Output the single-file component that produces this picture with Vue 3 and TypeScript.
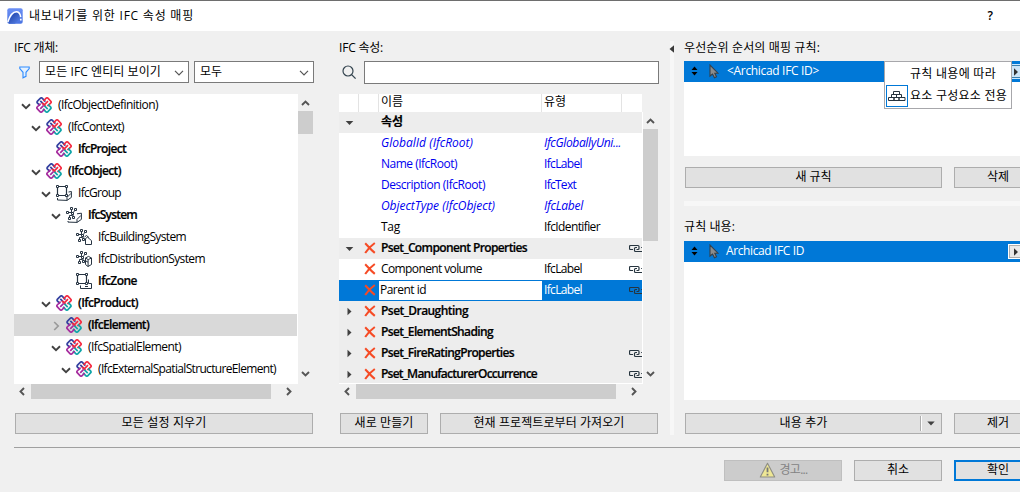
<script setup lang="ts">
import type { ObjectDirective } from 'vue'

type TreeIcon = 'ifc' | 'group' | 'system' | 'building' | 'distribution' | 'zone'
interface TreeRow { label: string; level: number; icon: TreeIcon; w: number; bold?: boolean; arrow?: 'open' | 'closed'; selected?: boolean }
interface PropRow { name: string; w: number; type?: string; tw?: number; kind: 'group' | 'item'; open?: boolean; del?: boolean; link?: boolean; blue?: boolean; italic?: boolean; selected?: boolean }

/* Spreads a label's tracking so that it fills the given width. */
const vFit: ObjectDirective<HTMLElement, number> = {
  mounted(el, { value }) {
    const n = (el.textContent ?? '').length
    const natural = el.getBoundingClientRect().width
    if (n) el.style.letterSpacing = `${(value - natural) / n}px`
  },
}

const tree: TreeRow[] = [
  { label: '(IfcObjectDefinition)', level: 0, icon: 'ifc', w: 100, arrow: 'open' },
  { label: '(IfcContext)', level: 1, icon: 'ifc', w: 56, arrow: 'open' },
  { label: 'IfcProject', level: 2, icon: 'ifc', w: 48, bold: true },
  { label: '(IfcObject)', level: 1, icon: 'ifc', w: 53, bold: true, arrow: 'open' },
  { label: 'IfcGroup', level: 2, icon: 'group', w: 43, arrow: 'open' },
  { label: 'IfcSystem', level: 3, icon: 'system', w: 49, bold: true, arrow: 'open' },
  { label: 'IfcBuildingSystem', level: 4, icon: 'building', w: 88 },
  { label: 'IfcDistributionSystem', level: 4, icon: 'distribution', w: 107 },
  { label: 'IfcZone', level: 4, icon: 'zone', w: 39, bold: true },
  { label: '(IfcProduct)', level: 2, icon: 'ifc', w: 60, bold: true, arrow: 'open' },
  { label: '(IfcElement)', level: 3, icon: 'ifc', w: 61, bold: true, arrow: 'closed', selected: true },
  { label: '(IfcSpatialElement)', level: 3, icon: 'ifc', w: 93, arrow: 'open' },
  { label: '(IfcExternalSpatialStructureElement)', level: 4, icon: 'ifc', w: 178, arrow: 'open' },
]

const props: PropRow[] = [
  { name: '속성', w: 22, kind: 'group', open: true },
  { name: 'GlobalId (IfcRoot)', w: 92, type: 'IfcGloballyUni...', tw: 77, kind: 'item', blue: true, italic: true },
  { name: 'Name (IfcRoot)', w: 76, type: 'IfcLabel', tw: 38, kind: 'item', blue: true },
  { name: 'Description (IfcRoot)', w: 104, type: 'IfcText', tw: 32, kind: 'item', blue: true },
  { name: 'ObjectType (IfcObject)', w: 114, type: 'IfcLabel', tw: 39, kind: 'item', blue: true, italic: true },
  { name: 'Tag', w: 19, type: 'IfcIdentifier', tw: 56, kind: 'item' },
  { name: 'Pset_Component Properties', w: 146, kind: 'group', open: true, del: true, link: true },
  { name: 'Component volume', w: 101, type: 'IfcLabel', tw: 38, kind: 'item', del: true, link: true },
  { name: 'Parent id', w: 46, type: 'IfcLabel', tw: 38, kind: 'item', del: true, link: true, selected: true },
  { name: 'Pset_Draughting', w: 87, kind: 'group', del: true },
  { name: 'Pset_ElementShading', w: 112, kind: 'group', del: true },
  { name: 'Pset_FireRatingProperties', w: 133, kind: 'group', del: true, link: true },
  { name: 'Pset_ManufacturerOccurrence', w: 156, kind: 'group', del: true, link: true },
]
</script>

<template>
  <div class="dialog">
    <header class="titlebar">
      <svg class="logo" width="16" height="16" viewBox="0 0 16 16">
        <defs>
          <linearGradient id="logoBg" x1="0" y1="0" x2="0" y2="1"><stop offset="0" stop-color="#6b8ff5" /><stop offset="1" stop-color="#4a74e2" /></linearGradient>
          <linearGradient id="logoIn" x1="0" y1="0" x2="1" y2="1"><stop offset="0" stop-color="#17399d" /><stop offset="1" stop-color="#5d88ef" /></linearGradient>
        </defs>
        <rect x=".3" y=".3" width="15.4" height="15.4" rx="2" fill="url(#logoBg)" />
        <path d="M1.500 14.500C4 8 7 4 10.500 4.500c2 .3 3 3 3.300 5.500L8 15.700H2z" fill="url(#logoIn)" />
        <path d="M.8 14C3 7 6 3.400 9.800 3.700c2.500.3 3.600 2.600 3.900 5.500" fill="none" stroke="#fff" stroke-width="1.500" />
        <path d="M13 10.800h1.600v1.600H13z" fill="#fff" />
      </svg>
      <span v-fit="165" class="title">내보내기를 위한 IFC 속성 매핑</span>
      <span class="help">?</span>
    </header>

    <main class="columns">
      <section class="col left">
        <div class="caption"><span v-fit="44">IFC 개체:</span></div>
        <div class="filters">
          <svg class="funnel" width="11" height="13" viewBox="0 0 11 13"><path d="M.8 1h9.400v1.600L7 6.300v4L4 11.800V6.300L.8 2.600z" fill="#e4f1ff" stroke="#2e8bff" stroke-width="1.100" /></svg>
          <div class="combo wide"><span v-fit="116">모든 IFC 엔티티 보이기</span><svg width="10" height="6" viewBox="0 0 10 6"><path d="M1 .8l4 4 4-4" fill="none" stroke="#555" stroke-width="1.200" /></svg></div>
          <div class="combo"><span v-fit="22">모두</span><svg width="10" height="6" viewBox="0 0 10 6"><path d="M1 .8l4 4 4-4" fill="none" stroke="#555" stroke-width="1.200" /></svg></div>
        </div>
        <div class="scrollgrid tree-grid">
          <div class="tree">
            <div v-for="row in tree" :key="row.label" class="tree-row" :class="{ selected: row.selected, bold: row.bold }" :style="{ paddingLeft: 6 + row.level * 10 + 'px' }">
              <span class="twist">
                <svg v-if="row.arrow === 'open'" width="10" height="7" viewBox="0 0 10 7"><path d="M1 1.300l4 3.900 4-3.900" fill="none" stroke="#424242" stroke-width="1.900" /></svg>
                <svg v-else-if="row.arrow" class="closed" width="7" height="10" viewBox="0 0 7 10"><path d="M1.200 1l4 4-4 4" fill="none" stroke="#9a9a9a" stroke-width="1.700" /></svg>
              </span>
              <svg class="node-icon" width="16" height="16" viewBox="0 0 16 16">
                <g v-if="row.icon === 'ifc'" fill="none" stroke-width="1.700">
                  <path d="M4 8.600L1.300 5.900a1.300 1.300 0 0 1 0-1.500L4.500 1.200a1.300 1.300 0 0 1 1.700 0L9.400 4.600" stroke="#33409f" />
                  <path d="M4.300 3.900L7.800 7.400" stroke="#33409f" />
                  <path d="M7.400 4L10.200 1.200a1.300 1.300 0 0 1 1.700 0L14.800 4.200a1.300 1.300 0 0 1 0 1.700L11.500 9.200" stroke="#f5283f" />
                  <path d="M12 4.200L8.300 7.900M6 5.800L9.800 9.600" stroke="#f5283f" />
                  <path d="M12 7.400L14.700 10.100a1.300 1.300 0 0 1 0 1.600L11.700 14.800a1.300 1.300 0 0 1-1.700 0L7 11.800" stroke="#0ea5a8" />
                  <path d="M11.700 12.100L8.500 8.900" stroke="#0ea5a8" />
                  <path d="M8.700 12L5.900 14.800a1.300 1.300 0 0 1-1.700 0L1.200 11.700a1.300 1.300 0 0 1 0-1.700L4.600 6.700" stroke="#a62c9e" />
                  <path d="M4.200 11.800L7.700 8.300" stroke="#a62c9e" />
                </g>
                <g v-else-if="row.icon === 'group' || row.icon === 'zone'" fill="none" stroke="#273442" stroke-width="1">
                  <path d="M1.500 2.500v7M2.500 1.500h7M10.500 2.500v7M2.500 10.500h7" stroke-width="1.200" />
                  <path d="M.5.500h2v2h-2zM9.500.500h2v2h-2zM.5 9.500h2v2h-2zM9.500 9.500h2v2h-2z" fill="#fff" />
                  <path v-if="row.icon === 'group'" d="M1.500 13v2l9.500.4 4.400-3V6.500l-2.900.5m-1.500 8.400v-3l4-4" />
                  <path v-else d="M4.500 12.500v3h11v-5h-3v-4M9 13.500h3" />
                </g>
                <g v-else fill="none" stroke="#273442" stroke-width="1">
                  <path d="M2.500 5.500h4M7 5.500v5M7 5.500l3-3M6.500 8.500h-3v2M5.500 2v3.500" />
                  <path d="M4.500.500h2v2h-2zM8.500 1.500h2v2h-2zM.5 4.500h2v2h-2zM5.500 5.500h2v2h-2zM2.500 10.500h2v2h-2zM6.500 9.500h2v2h-2z" fill="#fff" />
                  <path v-if="row.icon === 'system'" d="M2 14v1.100l9 .3 4.400-3V6.200L11 6.800m0 8.600v-3l4-4" />
                  <path v-else-if="row.icon === 'building'" d="M9.500 15.500v-6l2-1.300 4 3.400v3.900zM8.500 8l2-1.500L13 8.600" fill="#fff" />
                  <path v-else d="M9.500 7l3-1.600 3 1.600v6.500l-3.500 2-2.500-2zM9.500 7l2.700 1.600L15.500 7m-3.400 1.600v6.900M10 10l2 1.200" fill="#fff" />
                </g>
              </svg>
              <span v-fit="row.w" class="node-label">{{ row.label }}</span>
            </div>
          </div>
          <div class="vbar"><svg class="up" width="9" height="6" viewBox="0 0 9 6"><path d="M1 5l3.500-3.500L8 5" /></svg><i class="thumb" /><svg class="down" width="9" height="6" viewBox="0 0 9 6"><path d="M1 1l3.500 3.500L8 1" /></svg></div>
          <div class="hbar"><svg width="6" height="9" viewBox="0 0 6 9"><path d="M5 1L1.500 4.500 5 8" /></svg><i class="thumb" /><svg width="6" height="9" viewBox="0 0 6 9"><path d="M1 1l3.500 3.500L1 8" /></svg></div>
        </div>
        <div class="actions"><button class="btn grow"><span v-fit="85">모든 설정 지우기</span></button></div>
      </section>

      <section class="col middle">
        <div class="caption"><span v-fit="44">IFC 속성:</span></div>
        <div class="filters">
          <svg class="lens" width="15" height="15" viewBox="0 0 15 15"><circle cx="6" cy="6" r="5" fill="none" stroke="#34444f" stroke-width="1.200" /><path d="M9.600 9.600l4 4" stroke="#34444f" stroke-width="1.300" /></svg>
          <input class="search" type="text" aria-label="IFC 속성" />
        </div>
        <div class="scrollgrid prop-grid">
          <div class="prop-head prop-cols"><span /><span /><span><b v-fit="22">이름</b></span><span><b v-fit="22">유형</b></span><span /></div>
          <div class="props">
            <div v-for="row in props" :key="row.name" class="prop-row prop-cols" :class="[row.kind, { blue: row.blue, italic: row.italic, selected: row.selected }]">
              <span class="cell center">
                <svg v-if="row.kind === 'group'" width="9" height="9" viewBox="0 0 9 9"><path :d="row.open ? 'M.7 3h7.600L4.500 7z' : 'M2.500.8v7.400L6.500 4.500z'" fill="#404040" /></svg>
              </span>
              <span class="cell center"><svg v-if="row.del" class="cross" width="12" height="12" viewBox="0 0 12 12"><path d="M1.200 1.200c2.500 2.300 5 6 9.600 9.600M10.800 1C7 3.600 4 7 1.200 11" fill="none" stroke="#f64b25" stroke-width="2.100" /></svg></span>
              <span class="cell name"><span v-fit="row.w">{{ row.name }}</span></span>
              <span class="cell type"><span v-if="row.type" v-fit="row.tw ?? 0">{{ row.type }}</span></span>
              <span class="cell link"><svg v-if="row.link" width="13" height="9" viewBox="0 0 13 9"><path d="M4 5.500H1.500A1 1 0 0 1 .5 4.500v-2a1 1 0 0 1 1-1H9a1 1 0 0 1 1 1v2a1 1 0 0 1-1 1H7.500M13 7.500H6.500a1 1 0 0 1-1-1v-2a1 1 0 0 1 1-1H8M12.200 3.500h.8" fill="none" stroke="#26343e" stroke-width="1.200" /></svg></span>
            </div>
          </div>
          <div class="vbar"><svg class="up" width="9" height="6" viewBox="0 0 9 6"><path d="M1 5l3.500-3.500L8 5" /></svg><i class="thumb" /><svg class="down" width="9" height="6" viewBox="0 0 9 6"><path d="M1 1l3.500 3.500L8 1" /></svg></div>
          <div class="hbar"><svg width="6" height="9" viewBox="0 0 6 9"><path d="M5 1L1.500 4.500 5 8" /></svg><i class="thumb" /><svg width="6" height="9" viewBox="0 0 6 9"><path d="M1 1l3.500 3.500L1 8" /></svg></div>
        </div>
        <div class="actions"><button class="btn new"><span v-fit="59">새로 만들기</span></button><button class="btn grow"><span v-fit="151">현재 프로젝트로부터 가져오기</span></button></div>
      </section>

      <div class="splitter"><svg width="5" height="8" viewBox="0 0 5 8"><path d="M5 .3v7.400L.5 4z" fill="#3a3a3a" /></svg></div>

      <section class="col right">
        <div class="caption"><span v-fit="136">우선순위 순서의 매핑 규칙:</span></div>
        <div class="list rules">
          <div class="list-row">
            <svg class="sort" width="7" height="10" viewBox="0 0 7 10"><path d="M.5 4l3-3.500 3 3.500zM.5 6h6l-3 3.500z" fill="#000" /></svg>
            <svg class="cursor" width="10" height="15" viewBox="0 0 10 15"><path d="M1 1v11l2.500-2 2 3.800 2-1-1.700-3.600H9z" fill="#8c8c8c" stroke="#34404b" stroke-width="1.100" /></svg>
            <span v-fit="92">&lt;Archicad IFC ID&gt;</span>
            <i class="flyout hot"><svg width="6" height="8" viewBox="0 0 6 8"><path d="M1 .3v7.400L5 4z" fill="#333" /></svg></i>
          </div>
          <div class="popup">
            <div class="popup-row"><i class="slot" /><span v-fit="86">규칙 내용에 따라</span></div>
            <div class="popup-row">
              <i class="slot on"><svg width="18" height="12" viewBox="0 0 18 12"><path d="M5.500 1.500h6v3h-6zM3.500 4.500h5v3h-5zM8.500 4.500h5v3h-5zM.5 7.500h5.500v3H.5zM6 7.500h5v3H6zM11 7.500h6v3h-6z" fill="none" stroke="#26333d" /></svg></i>
              <span v-fit="97">요소 구성요소 전용</span>
            </div>
          </div>
        </div>
        <div class="actions"><button class="btn main"><span v-fit="36">새 규칙</span></button><button class="btn side"><span v-fit="22">삭제</span></button></div>
        <div class="hsplit" />
        <div class="caption second"><span v-fit="51">규칙 내용:</span></div>
        <div class="list contents">
          <div class="list-row">
            <svg class="sort" width="7" height="10" viewBox="0 0 7 10"><path d="M.5 4l3-3.500 3 3.500zM.5 6h6l-3 3.500z" fill="#000" /></svg>
            <svg class="cursor" width="10" height="15" viewBox="0 0 10 15"><path d="M1 1v11l2.500-2 2 3.800 2-1-1.700-3.600H9z" fill="#8c8c8c" stroke="#34404b" stroke-width="1.100" /></svg>
            <span v-fit="78" class="plain">Archicad IFC ID</span>
            <i class="flyout"><svg width="6" height="8" viewBox="0 0 6 8"><path d="M1 .3v7.400L5 4z" fill="#333" /></svg></i>
          </div>
        </div>
        <div class="actions last"><button class="btn main split"><span class="split-text"><span v-fit="48">내용 추가</span></span><i class="drop"><svg width="8" height="5" viewBox="0 0 8 5"><path d="M.3.500h7.400L4 4.600z" fill="#404040" /></svg></i></button><button class="btn side"><span v-fit="22">제거</span></button></div>
      </section>
    </main>

    <footer class="footer">
      <button class="btn warn" disabled>
        <svg width="17" height="16" viewBox="0 0 17 16"><path d="M8.500 1.200L15.700 15H1.300z" fill="#eee795" stroke="#8d8d85" stroke-width="1.100" stroke-linejoin="round" /><path d="M8.500 5.500v4.800M8.500 11.800v1.700" stroke="#777" stroke-width="1.800" /></svg>
        <span v-fit="28">경고...</span>
      </button>
      <button class="btn cancel"><span v-fit="22">취소</span></button>
      <button class="btn side ok"><span v-fit="22">확인</span></button>
    </footer>
  </div>
</template>

<style>
html, body { margin: 0; overflow: hidden; }
</style>

<style scoped>
* { box-sizing: border-box; }
.dialog { width: 1020px; height: 492px; overflow: hidden; background: #f0f0f0; color: #000; font: 12px/16px "Open Sans", "Noto Sans CJK KR", sans-serif; white-space: nowrap; display: flex; flex-direction: column; }
svg { display: block; flex: none; }
i { font-style: normal; }
.titlebar { height: 31px; flex: none; background: #fff; border-top: 1px solid #6e6e6e; display: flex; align-items: center; padding: 0 27px 0 7px; }
.title { margin-left: 6px; }
.help { margin-left: auto; font-weight: 600; font-size: 12px; }
.columns { display: flex; height: 417px; flex: none; margin-left: 14px; border-bottom: 1px solid #a0a0a0; }
.col { display: flex; flex-direction: column; flex: none; }
.left { width: 300px; }
.middle { width: 320px; margin-left: 25px; }
.caption { height: 30px; padding-top: 9px; flex: none; }
.filters { height: 33px; flex: none; display: flex; align-items: flex-start; }
.funnel { margin: 5px 9px 0 5px; }
.combo { height: 22px; width: 120px; background: #fff; border: 1px solid #7a7a7a; padding: 0 4px 1px 5px; display: flex; align-items: center; justify-content: space-between; }
.combo svg { margin-top: 3px; }
.combo.wide { width: 150px; margin-right: 5px; }
.lens { margin: 4px 7px 0 3px; }
.search { width: 295px; height: 23px; border: 1px solid #7a7a7a; background: #fff; padding: 0; border-radius: 0; outline: 0; }
.scrollgrid { display: grid; height: 305px; flex: none; }
.tree-grid { grid-template: 290px 15px / 284px 15px; }
.tree { background: #fff; overflow: hidden; }
.tree-row { height: 22px; display: flex; align-items: center; }
.tree-row.selected { background: #d9d9d9; margin-right: 1px; }
.bold, .group { font-weight: 600; -webkit-text-stroke: .2px currentColor; }
.twist { width: 11px; padding-left: 1px; margin-right: 5px; padding-top: 2px; }
.closed { margin-left: 2px; }
.node-icon { margin-right: 6px; }
.node-label { margin-top: -1px; }
.vbar { display: flex; flex-direction: column; align-items: center; padding: 6px 0 7px; }
.vbar .thumb { width: 15px; height: 23px; margin-top: 5px; background: #cdcdcd; }
.vbar .down { margin-top: auto; }
.hbar { display: flex; align-items: center; padding-left: 5px; }
.hbar .thumb { width: 240px; height: 15px; background: #cdcdcd; margin: 0 15px 0 6px; }
.vbar path, .hbar path { fill: none; stroke: #555; stroke-width: 1.9; }
.actions { display: flex; padding: 14px 1px 0; gap: 12px; height: 35px; flex: none; }
.btn { height: 21px; flex: none; border: 1px solid #adadad; background: #e1e1e1; padding: 0 0 1px; font: inherit; color: #000; display: flex; align-items: center; justify-content: center; border-radius: 0; }
.grow { flex: 1; }
.new { width: 88px; }
.prop-grid { grid-template: 18px 272px 15px / 304px 15px; }
.prop-cols { display: grid; grid-template-columns: 20px 20px 163px 80px 20px; }
.prop-head { grid-column: 1 / 3; width: 303px; background: #fff; line-height: 16px; }
.prop-head span { border-right: 1px solid #e3e3e3; padding-left: 2px; }
.prop-head span:last-child { border: 0; }
.prop-head b { font-weight: 400; display: inline-block; }
.props { background: #fff; overflow: hidden; }
.prop-row { width: 303px; height: 21px; overflow: hidden; }
.prop-row:last-child { height: 19px; }
.cell { height: 21px; line-height: 20px; overflow: hidden; padding-left: 2px; }
.cell.center { display: flex; align-items: center; justify-content: center; padding-left: 1px; }
.cell .cross { margin-top: -1px; }
.cell > span { display: inline-block; }
.group { background: #ededed; }
.blue { color: #0000f0; }
.italic { font-style: italic; }
.prop-row.selected { background: #0078d7; }
.prop-row.selected .name { background: #fff; height: 19px; margin-top: 1px; line-height: 18px; padding-left: 1px; }
.prop-row.selected .type { color: #fff; }
.cell.link { padding: 6px 0 0 7px; }
.prop-grid .vbar .thumb { height: 112px; width: 15px; margin-top: 5px; }
.prop-grid .hbar .thumb { width: 260px; margin-right: 15px; }
.splitter { width: 5px; height: 394px; margin: 10px 10px 0 11px; background: #f7f7f7; }
.splitter svg { margin: 4px 0 0 -1px; }
.right { width: 360px; }
.list { background: #fff; flex: none; position: relative; }
.rules { height: 95px; }
.contents { height: 159px; }
.list-row { height: 21px; width: 336px; background: #0078d7; color: #fff; display: flex; align-items: center; padding-left: 7px; }
.list-row > span { margin: -1px 0 0 8px; }
.list-row > span.plain { margin-left: 7px; }
.sort { margin-top: -1px; }
.cursor { margin: -1px 0 0 11px; }
.flyout { width: 16px; height: 15px; margin-left: auto; margin-right: -4px; border: 1px solid #fff; background: #e8e8e8; box-shadow: inset 0 0 0 1px #adadad; display: flex; align-items: center; justify-content: center; }
.flyout.hot { border-color: #cce8ff; background: #cce4f7; box-shadow: inset 0 0 0 1px #3b7fae; }
.popup { position: absolute; left: 200px; top: 0; width: 128px; height: 48px; background: #fff; border: 1px solid #a7a7ab; padding: 1px; }
.popup-row { height: 22px; display: flex; align-items: center; }
.popup-row span { margin-top: -1px; }
.slot { width: 22px; height: 22px; margin-right: 2px; display: flex; align-items: center; justify-content: center; flex: none; }
.slot.on { border: 1px solid #0078d7; }
.rules + .actions { padding-top: 11px; height: 45px; }
.main { width: 257px; }
.side { width: 88px; }
.hsplit { height: 5px; background: #f7f7f7; flex: none; }
.caption.second { height: 35px; padding-top: 13px; }
.last { padding-top: 13px; }
.split { justify-content: flex-start; }
.split-text { flex: 1; padding-left: 1px; }
.drop { width: 21px; height: 15px; margin-top: 1px; border-left: 1px solid #adadad; box-shadow: inset 1px 0 #fff; display: flex; align-items: center; justify-content: center; }
.footer { display: flex; gap: 12px; padding: 12px 0 0 724px; }
.warn { width: 118px; background: #ccc; border-color: #bfbfbf; color: #838383; gap: 4px; }
.cancel { width: 88px; }
.ok { border: 2px solid #0078d7; }
</style>
